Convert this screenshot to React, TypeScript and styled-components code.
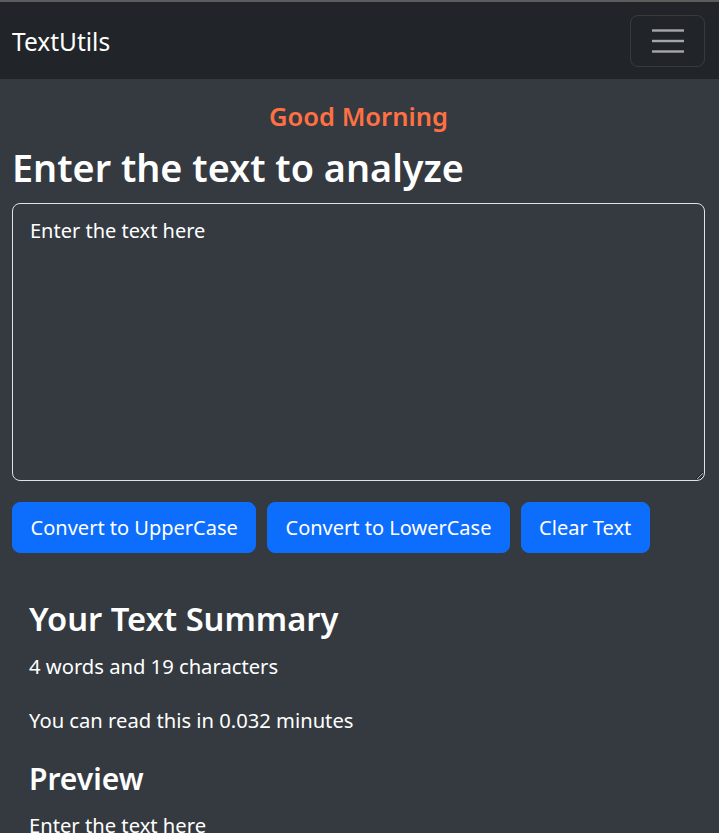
import React from "react";
import styled, { createGlobalStyle } from "styled-components";

const GlobalStyle = createGlobalStyle`
  html, body {
    margin: 0;
    padding: 0;
    background: #343a40;
    font-family: "Noto Sans", "Open Sans", sans-serif;
    color: #ffffff;
    overflow: hidden;
  }
  * { box-sizing: border-box; }
`;

const Navbar = styled.nav`
  display: flex;
  align-items: center;
  justify-content: space-between;
  height: 79px;
  padding: 0 14px 0 12px;
  background: #212529;
  border-top: 2px solid #5c5c5c;
`;

const Brand = styled.a`
  font-size: 24.5px;
  color: #ffffff;
  text-decoration: none;
  line-height: 1;
  padding-top: 3px;
`;

const Toggler = styled.button`
  width: 75px;
  height: 52px;
  display: flex;
  align-items: center;
  justify-content: center;
  background: transparent;
  border: 1px solid rgba(255, 255, 255, 0.1);
  border-radius: 8px;
  padding: 0;
  cursor: pointer;
`;

const Main = styled.main`
  padding: 0 14px 0 12px;
`;

const Greeting = styled.div`
  text-align: center;
  color: #ff7043;
  font-size: 25.5px;
  font-weight: 600;
  line-height: 1.2;
  margin-top: 22px;
`;

const Title = styled.h1`
  margin: 13px 0 13px;
  font-size: 37.8px;
  font-weight: 600;
  line-height: 1.2;
`;

const TextArea = styled.textarea`
  display: block;
  width: 100%;
  height: 278px;
  padding: 12px 17px;
  background: transparent;
  color: #ffffff;
  border: 1px solid #dee2e6;
  border-radius: 8px;
  font-family: inherit;
  font-size: 20px;
  line-height: 1.5;
  outline: none;
`;

const ButtonRow = styled.div`
  display: flex;
  gap: 10.5px;
  margin-top: 21px;
`;

const Button = styled.button`
  height: 51px;
  padding: 0 17.6px;
  background: #0d6efd;
  color: #ffffff;
  border: 1px solid #0d6efd;
  border-radius: 8px;
  font-family: inherit;
  font-size: 20px;
  cursor: pointer;
`;

const Summary = styled.section`
  padding: 0 29px;
  margin-top: 46px;
`;

const Heading = styled.h2<{ $size: number; $gap: number }>`
  margin: ${(p) => p.$gap}px 0 0;
  font-size: ${(p) => p.$size}px;
  font-weight: 600;
  line-height: 1.2;
`;

const Para = styled.p<{ $gap: number }>`
  margin: ${(p) => p.$gap}px 0 0;
  font-size: 20.2px;
  line-height: 1.5;
`;

const HamburgerIcon = () => (
  <svg width="32" height="24" viewBox="0 0 32 24" aria-hidden="true">
    <g stroke="rgba(255,255,255,0.6)" strokeWidth="2.4" strokeLinecap="butt">
      <line x1="0" y1="1.5" x2="32" y2="1.5" />
      <line x1="0" y1="12" x2="32" y2="12" />
      <line x1="0" y1="22.5" x2="32" y2="22.5" />
    </g>
  </svg>
);

export default function App() {
  const text = "Enter the text here";
  return (
    <>
      <GlobalStyle />
      <Navbar>
        <Brand href="#">TextUtils</Brand>
        <Toggler aria-label="Toggle navigation">
          <HamburgerIcon />
        </Toggler>
      </Navbar>
      <Main>
        <Greeting>Good Morning</Greeting>
        <Title>Enter the text to analyze</Title>
        <TextArea defaultValue={text} />
        <ButtonRow>
          <Button>Convert to UpperCase</Button>
          <Button>Convert to LowerCase</Button>
          <Button>Clear Text</Button>
        </ButtonRow>
      </Main>
      <Summary>
        <Heading $size={32.7} $gap={0}>Your Text Summary</Heading>
        <Para $gap={13}>4 words and 19 characters</Para>
        <Para $gap={24}>You can read this in 0.032 minutes</Para>
        <Heading $size={30} $gap={25}>Preview</Heading>
        <Para $gap={13}>{text}</Para>
      </Summary>
    </>
  );
}
